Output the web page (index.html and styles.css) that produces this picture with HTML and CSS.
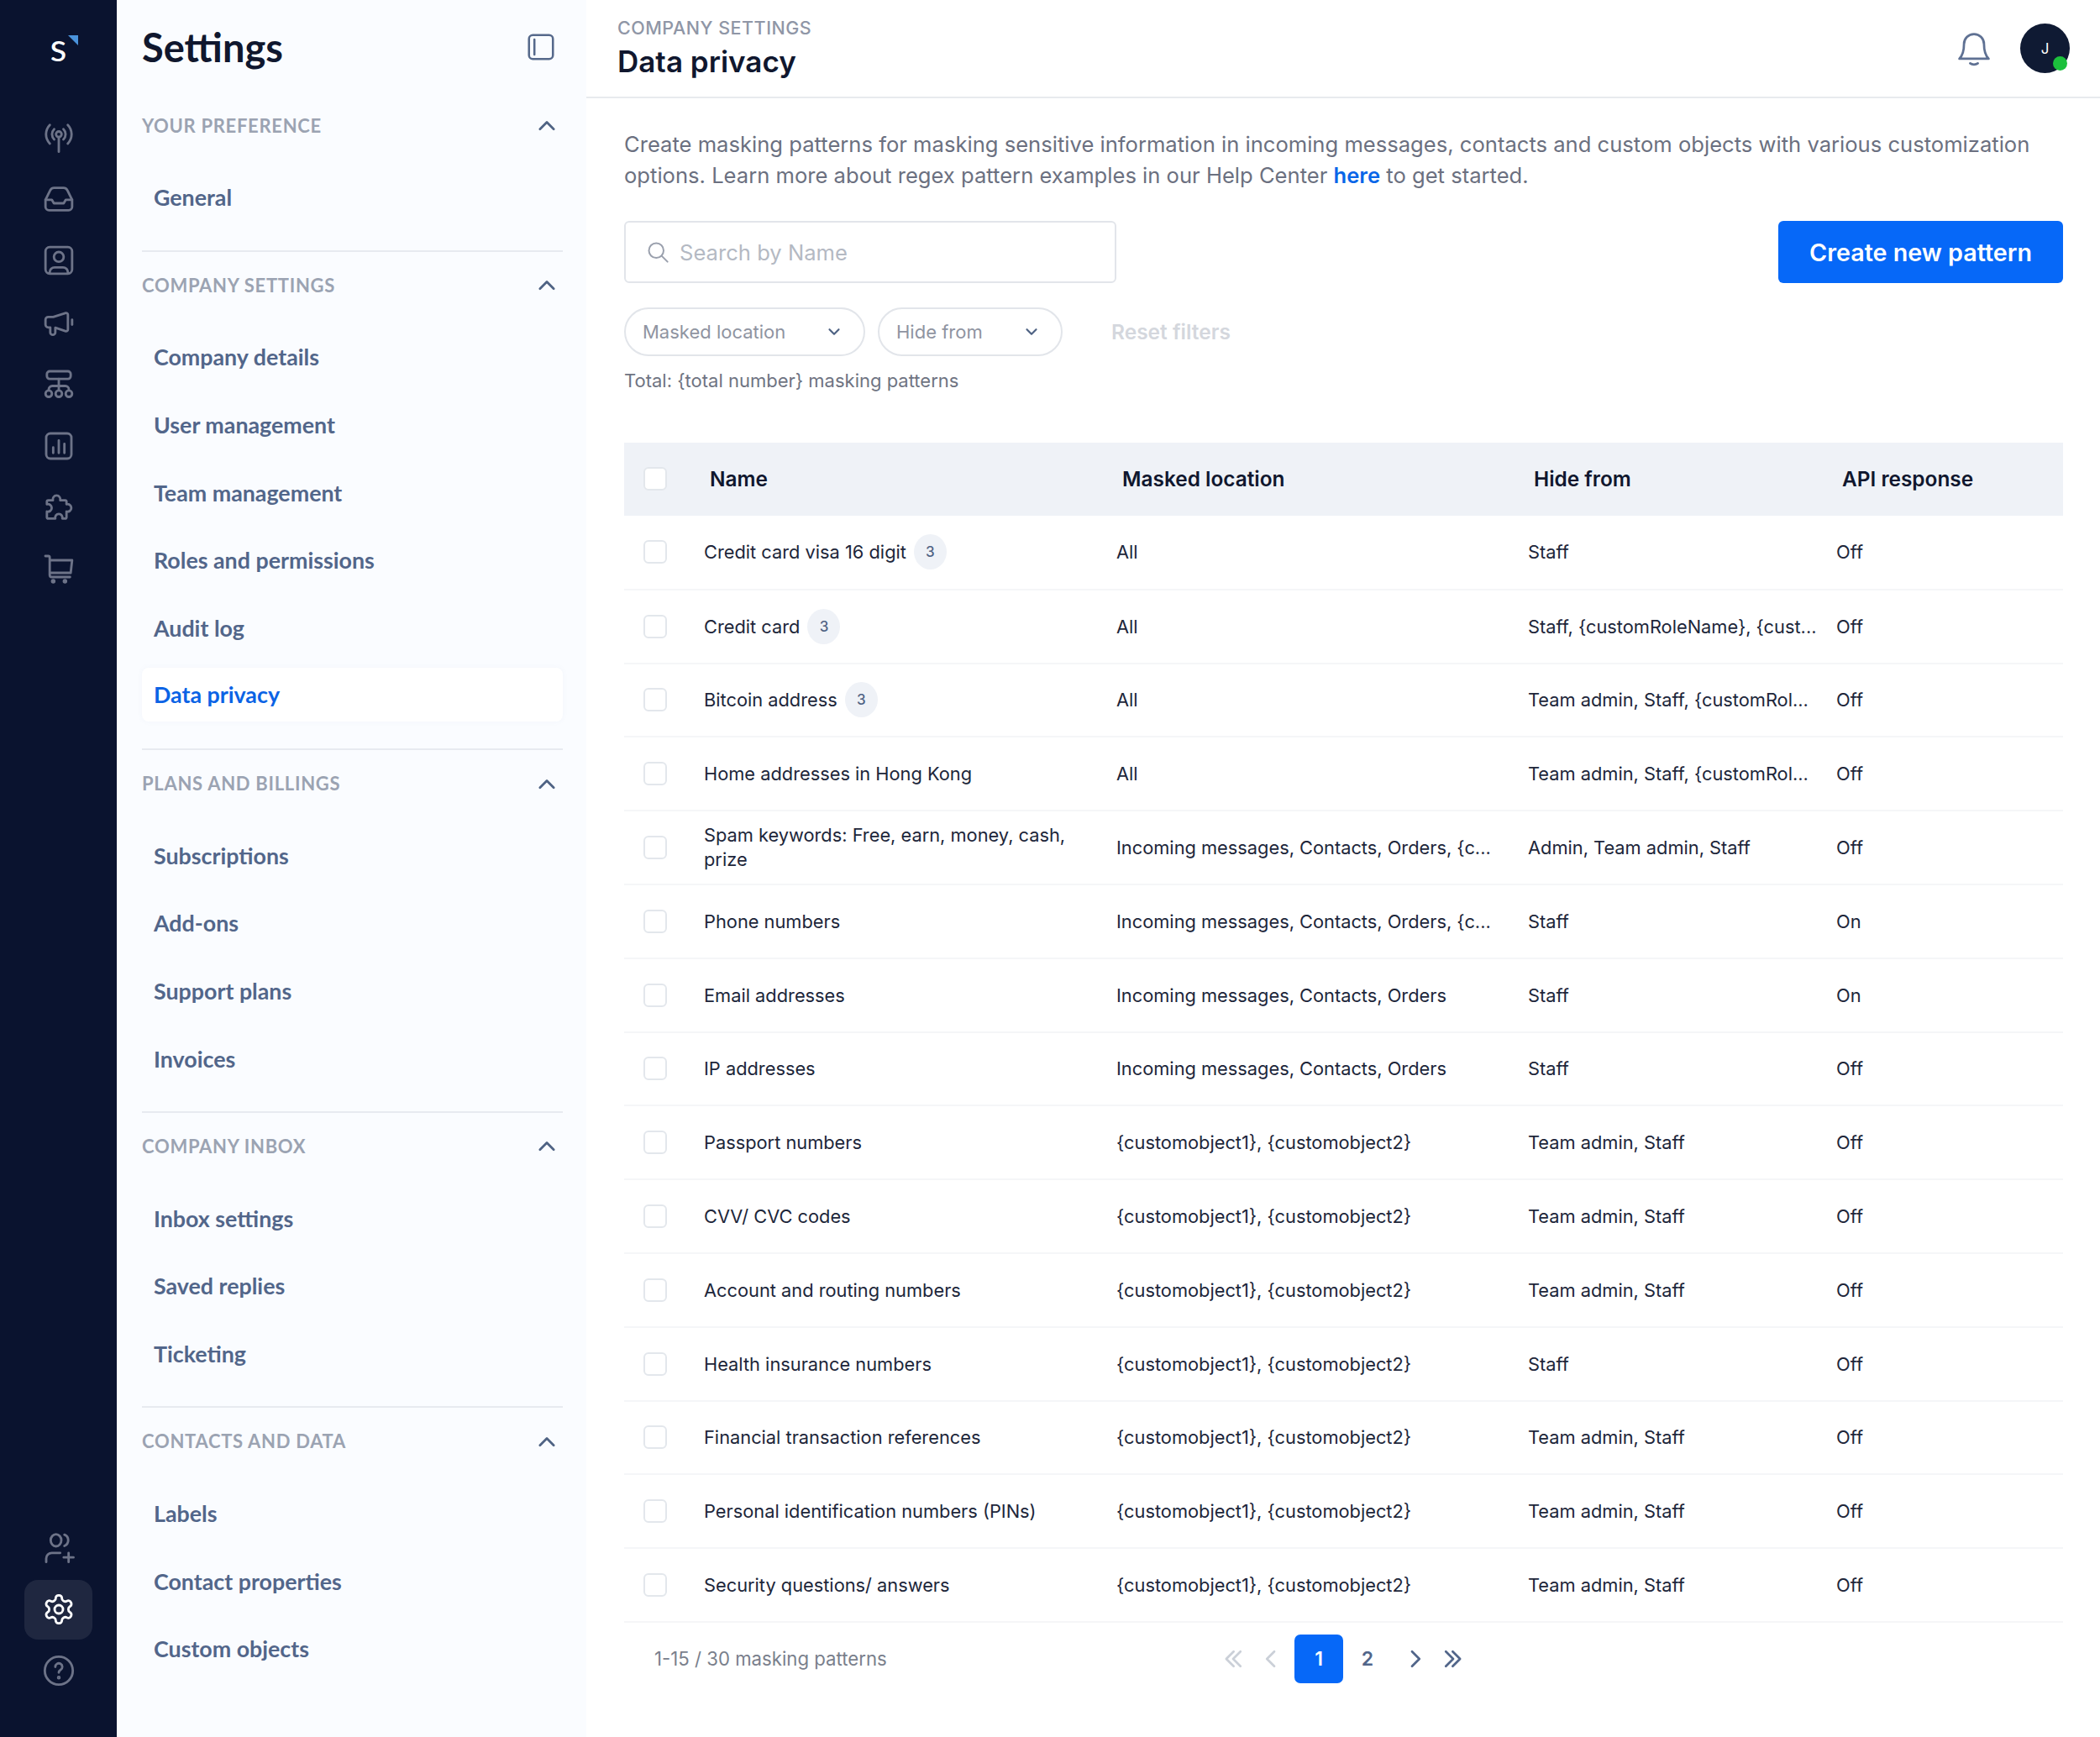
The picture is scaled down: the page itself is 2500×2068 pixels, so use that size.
FILE: index.html
```html
<!DOCTYPE html>
<html lang="en">
<head>
    <meta charset="UTF-8">
    <title>Data privacy</title>
    <link rel="stylesheet" href="styles.css">
</head>
<body>
    <!-- Icon rail -->
    <nav class="rail">
        <div class="logo"><span class="logo-s">s</span><span class="logo-mark"></span></div>
        <div class="rail-btn"><svg viewBox="0 0 24 24"><circle cx="12" cy="9.500" r="2"/><path d="M12 11.500V22M8.700 5.800a5.200 5.200 0 0 0 0 7.400M15.300 5.800a5.200 5.200 0 0 1 0 7.400M5.600 2.800a9.600 9.600 0 0 0 0 13.400M18.400 2.800a9.600 9.600 0 0 1 0 13.400"/></svg></div>
        <div class="rail-btn"><svg viewBox="0 0 24 24"><path d="M2.500 12.500 6 5.500a3 3 0 0 1 2.600-1.500h6.800A3 3 0 0 1 18 5.500l3.500 7v5a2.500 2.500 0 0 1-2.500 2.500H5a2.500 2.500 0 0 1-2.500-2.500z"/><path d="M2.500 12.500H7l1.500 2.500h7l1.500-2.500h4.500"/></svg></div>
        <div class="rail-btn"><svg viewBox="0 0 24 24"><rect x="2.500" y="2.500" width="19" height="19" rx="3"/><circle cx="12" cy="9.500" r="3.500"/><path d="M5.500 21v-.5a3.500 3.500 0 0 1 3.500-3.500h6a3.500 3.500 0 0 1 3.500 3.500v.5"/></svg></div>
        <div class="rail-btn"><svg viewBox="0 0 24 24"><path d="M4.500 8H8l9-2.800a1.200 1.200 0 0 1 1.500 1.200V17a1.200 1.200 0 0 1-1.500 1.200l-7.500-2.500V19a1.800 1.800 0 0 1-3.600 0v-3.500H4.500a2 2 0 0 1-2-2V10a2 2 0 0 1 2-2z"/><path d="M21.500 10v3.500"/></svg></div>
        <div class="rail-btn"><svg viewBox="0 0 24 24"><rect x="3.500" y="3" width="17" height="5.500" rx="2"/><path d="M12 8.500V16.500M4.800 16.500v-.5a2.500 2.500 0 0 1 2.500-2.500h9.400a2.500 2.500 0 0 1 2.500 2.500v.5"/><circle cx="4.800" cy="19" r="2.300"/><circle cx="12" cy="19" r="2.300"/><circle cx="19.200" cy="19" r="2.300"/></svg></div>
        <div class="rail-btn"><svg viewBox="0 0 24 24"><rect x="3" y="3" width="18" height="18" rx="3"/><path d="M8 13v4M12 8v9M16 10.500V17"/></svg></div>
        <div class="rail-btn"><svg viewBox="0 0 24 24"><path d="M7.800 7a2.700 2.700 0 1 1 5.200 0h3.500a1 1 0 0 1 1 1v1.800a2.700 2.700 0 1 1 0 5.200v4a1 1 0 0 1-1 1h-2a2.600 2.600 0 1 0-5 0h-5a1 1 0 0 1-1-1v-4a2.700 2.700 0 1 0 0-5.200V8a1 1 0 0 1 1-1z"/></svg></div>
        <div class="rail-btn"><svg viewBox="0 0 24 24"><path d="M2.400 3H4.500a1 1 0 0 1 1 1v12.500A1.500 1.500 0 0 0 7 18h13M5.500 6h16l-1 9h-15"/><circle class="dot" cx="8" cy="21" r=".8"/><circle class="dot" cx="16.400" cy="21" r=".8"/></svg></div>
        <div class="rail-bottom">
            <div class="rail-btn"><svg viewBox="0 0 24 24"><ellipse cx="10" cy="6.500" rx="3.800" ry="4.300"/><path d="M16 2.500a4.300 4.300 0 0 1 0 8M3 22v-2.500a4 4 0 0 1 4-4h6M19 15.500v6.500M15.500 18.700h7"/></svg></div>
            <div class="rail-btn active"><svg viewBox="0 0 24 24"><path d="M12.220 2h-.44a2 2 0 0 0-2 2v.18a2 2 0 0 1-1 1.730l-.43.25a2 2 0 0 1-2 0l-.15-.08a2 2 0 0 0-2.730.73l-.22.38a2 2 0 0 0 .73 2.730l.15.1a2 2 0 0 1 1 1.720v.51a2 2 0 0 1-1 1.740l-.15.09a2 2 0 0 0-.73 2.730l.22.38a2 2 0 0 0 2.730.73l.15-.08a2 2 0 0 1 2 0l.43.25a2 2 0 0 1 1 1.730V20a2 2 0 0 0 2 2h.44a2 2 0 0 0 2-2v-.18a2 2 0 0 1 1-1.730l.43-.25a2 2 0 0 1 2 0l.15.08a2 2 0 0 0 2.730-.73l.22-.39a2 2 0 0 0-.73-2.730l-.15-.08a2 2 0 0 1-1-1.740v-.5a2 2 0 0 1 1-1.740l.15-.09a2 2 0 0 0 .73-2.730l-.22-.38a2 2 0 0 0-2.730-.73l-.15.08a2 2 0 0 1-2 0l-.43-.25a2 2 0 0 1-1-1.730V4a2 2 0 0 0-2-2z"/><circle cx="12" cy="12" r="3"/></svg></div>
            <div class="rail-btn"><svg viewBox="0 0 24 24"><circle cx="12" cy="12" r="10"/><path d="M9.500 9.300a2.500 2.500 0 1 1 3.800 2.100c-.8.5-1.300 1-1.300 2"/><circle class="dot" cx="12" cy="17" r=".5"/></svg></div>
        </div>
    </nav>

    <!-- Settings menu -->
    <aside class="sidebar">
        <div class="sidebar-head">
            <h2>Settings</h2>
            <svg class="collapse" viewBox="0 0 24 24"><rect x="2.500" y="2.500" width="19" height="19" rx="3"/><path d="M6.800 6v12"/></svg>
        </div>

        <section class="menu-group">
            <div class="menu-title"><span>YOUR PREFERENCE</span><svg viewBox="0 0 24 24"><path d="M5 16l7-7 7 7"/></svg></div>
            <a class="menu-item">General</a>
        </section>
        <section class="menu-group">
            <div class="menu-title"><span>COMPANY SETTINGS</span><svg viewBox="0 0 24 24"><path d="M5 16l7-7 7 7"/></svg></div>
            <a class="menu-item">Company details</a>
            <a class="menu-item">User management</a>
            <a class="menu-item">Team management</a>
            <a class="menu-item">Roles and permissions</a>
            <a class="menu-item">Audit log</a>
            <a class="menu-item active">Data privacy</a>
        </section>
        <section class="menu-group">
            <div class="menu-title"><span>PLANS AND BILLINGS</span><svg viewBox="0 0 24 24"><path d="M5 16l7-7 7 7"/></svg></div>
            <a class="menu-item">Subscriptions</a>
            <a class="menu-item">Add-ons</a>
            <a class="menu-item">Support plans</a>
            <a class="menu-item">Invoices</a>
        </section>
        <section class="menu-group">
            <div class="menu-title"><span>COMPANY INBOX</span><svg viewBox="0 0 24 24"><path d="M5 16l7-7 7 7"/></svg></div>
            <a class="menu-item">Inbox settings</a>
            <a class="menu-item">Saved replies</a>
            <a class="menu-item">Ticketing</a>
        </section>
        <section class="menu-group last">
            <div class="menu-title"><span>CONTACTS AND DATA</span><svg viewBox="0 0 24 24"><path d="M5 16l7-7 7 7"/></svg></div>
            <a class="menu-item">Labels</a>
            <a class="menu-item">Contact properties</a>
            <a class="menu-item">Custom objects</a>
        </section>
    </aside>

    <main class="main">
        <header class="topbar">
            <div class="topbar-title">
                <div class="crumb">COMPANY SETTINGS</div>
                <h1>Data privacy</h1>
            </div>
            <svg class="bell" viewBox="0 0 24 24"><path d="M12 2.500a6.500 6.500 0 0 0-6.500 6.500c0 6-1.500 8-3 9.500h19c-1.500-1.500-3-3.500-3-9.500A6.500 6.500 0 0 0 12 2.500z"/><path d="M9.500 21.500c1.300 1 3.700 1 5 0"/></svg>
            <div class="avatar">J<span class="status"></span></div>
        </header>

        <div class="content">
            <p class="intro">Create masking patterns for masking sensitive information in incoming messages, contacts and custom objects with various customization options. Learn more about regex pattern examples in our Help Center <a>here</a> to get started.</p>

            <div class="toolbar">
                <div class="search">
                    <svg viewBox="0 0 24 24"><circle cx="10.500" cy="10.500" r="7.500"/><path d="M16 16l6 6"/></svg>
                    <span>Search by Name</span>
                </div>
                <button class="primary">Create new pattern</button>
            </div>

            <div class="filters">
                <div class="pill loc">Masked location<svg viewBox="0 0 24 24"><path d="M6 9l6 6 6-6"/></svg></div>
                <div class="pill hide">Hide from<svg viewBox="0 0 24 24"><path d="M6 9l6 6 6-6"/></svg></div>
                <span class="reset">Reset filters</span>
            </div>
            <div class="total">Total: {total number} masking patterns</div>

            <table class="grid">
                <colgroup>
                    <col class="c-check"><col class="c-name"><col class="c-loc"><col class="c-hide"><col class="c-api">
                </colgroup>
                <thead>
                    <tr>
                        <th><span class="check"></span></th>
                        <th>Name</th>
                        <th>Masked location</th>
                        <th>Hide from</th>
                        <th>API response</th>
                    </tr>
                </thead>
                <tbody>
                    <tr><td><span class="check"></span></td><td><div class="name">Credit card visa 16 digit <span class="count">3</span></div></td><td>All</td><td>Staff</td><td>Off</td></tr>
                    <tr><td><span class="check"></span></td><td><div class="name">Credit card <span class="count">3</span></div></td><td>All</td><td>Staff, {customRoleName}, {cust...</td><td>Off</td></tr>
                    <tr><td><span class="check"></span></td><td><div class="name">Bitcoin address <span class="count">3</span></div></td><td>All</td><td>Team admin, Staff, {customRol...</td><td>Off</td></tr>
                    <tr><td><span class="check"></span></td><td>Home addresses in Hong Kong</td><td>All</td><td>Team admin, Staff, {customRol...</td><td>Off</td></tr>
                    <tr><td><span class="check"></span></td><td><div class="wrap">Spam keywords: Free, earn, money, cash, prize</div></td><td>Incoming messages, Contacts, Orders, {c...</td><td>Admin, Team admin, Staff</td><td>Off</td></tr>
                    <tr><td><span class="check"></span></td><td>Phone numbers</td><td>Incoming messages, Contacts, Orders, {c...</td><td>Staff</td><td>On</td></tr>
                    <tr><td><span class="check"></span></td><td>Email addresses</td><td>Incoming messages, Contacts, Orders</td><td>Staff</td><td>On</td></tr>
                    <tr><td><span class="check"></span></td><td>IP addresses</td><td>Incoming messages, Contacts, Orders</td><td>Staff</td><td>Off</td></tr>
                    <tr><td><span class="check"></span></td><td>Passport numbers</td><td>{customobject1}, {customobject2}</td><td>Team admin, Staff</td><td>Off</td></tr>
                    <tr><td><span class="check"></span></td><td>CVV/ CVC codes</td><td>{customobject1}, {customobject2}</td><td>Team admin, Staff</td><td>Off</td></tr>
                    <tr><td><span class="check"></span></td><td>Account and routing numbers</td><td>{customobject1}, {customobject2}</td><td>Team admin, Staff</td><td>Off</td></tr>
                    <tr><td><span class="check"></span></td><td>Health insurance numbers</td><td>{customobject1}, {customobject2}</td><td>Staff</td><td>Off</td></tr>
                    <tr><td><span class="check"></span></td><td>Financial transaction references</td><td>{customobject1}, {customobject2}</td><td>Team admin, Staff</td><td>Off</td></tr>
                    <tr><td><span class="check"></span></td><td>Personal identification numbers (PINs)</td><td>{customobject1}, {customobject2}</td><td>Team admin, Staff</td><td>Off</td></tr>
                    <tr><td><span class="check"></span></td><td>Security questions/ answers</td><td>{customobject1}, {customobject2}</td><td>Team admin, Staff</td><td>Off</td></tr>
                </tbody>
            </table>

            <div class="pager">
                <div class="pager-info">1-15 / 30 masking patterns</div>
                <div class="pages">
                    <svg class="off" viewBox="0 0 24 24"><path d="M12.500 5l-7 7 7 7M19 5l-7 7 7 7"/></svg>
                    <svg class="off" viewBox="0 0 24 24"><path d="M16 5l-7 7 7 7"/></svg>
                    <div class="page-nums">
                        <span class="page current">1</span>
                        <span class="page">2</span>
                    </div>
                    <svg viewBox="0 0 24 24"><path d="M8 5l7 7-7 7"/></svg>
                    <svg viewBox="0 0 24 24"><path d="M5 5l7 7-7 7M11.500 5l7 7-7 7"/></svg>
                </div>
            </div>
        </div>
    </main>
</body>
</html>
```

FILE: styles.css
```css
* {
    margin: 0;
    padding: 0;
    box-sizing: border-box;
}

html, body {
    height: 2068px;
}

body {
    display: flex;
    background: #fff;
    font-family: 'Inter', sans-serif;
    color: #1d2233;
    overflow: hidden;
}

svg {
    fill: none;
    stroke: currentColor;
    stroke-width: 1.7;
    stroke-linecap: round;
    stroke-linejoin: round;
    flex: none;
}

/* rail */
.rail {
    width: 139px;
    flex: none;
    background: #0a132f;
    display: flex;
    flex-direction: column;
    align-items: center;
    color: #6d7388;
    padding-top: 30px;
}

.logo {
    position: relative;
    height: 87px;
    width: 60px;
    color: #fff;
    margin-bottom: 10px;
    text-align: center;
}

.logo-s {
    font-family: 'Lato', sans-serif;
    font-weight: 400;
    font-size: 46px;
    line-height: 52px;
}

.logo-mark {
    position: absolute;
    top: 12px;
    right: 7px;
    border-top: 12px solid #4a93dc;
    border-left: 12px solid transparent;
}

.rail-btn {
    width: 81px;
    height: 73.4px;
    display: flex;
    align-items: center;
    justify-content: center;
    border-radius: 16px;
}

.rail-btn svg {
    width: 40px;
    height: 40px;
}

.rail-btn .dot {
    fill: currentColor;
}

.rail-btn.active {
    background: #1f2740;
    color: #fff;
    height: 71px;
    margin: 1px 0;
}

.rail-bottom {
    margin-top: auto;
    padding-bottom: 42px;
}

/* sidebar */
.sidebar {
    width: 559px;
    flex: none;
    background: #fafcff;
    padding: 0 28px 0 30px;
}

.sidebar-head {
    height: 129px;
    padding: 0 8px 17px 0;
    display: flex;
    align-items: center;
    justify-content: space-between;
}

.sidebar-head h2 {
    font-family: 'Lato', sans-serif;
    font-weight: 700;
    font-size: 47px;
    color: #10172e;
}

.collapse {
    width: 36px;
    height: 36px;
    color: #56698b;
}

.menu-group {
    border-bottom: 2px solid #e7eaf0;
    padding-bottom: 22px;
    margin-bottom: 19.5px;
}

.menu-group.last {
    border-bottom: 0;
}

.menu-title {
    height: 40px;
    display: flex;
    align-items: center;
    justify-content: space-between;
    font-family: 'Lato', sans-serif;
    font-weight: 700;
    font-size: 22px;
    letter-spacing: 0.7px;
    color: #9ba3b2;
    margin-bottom: 26px;
}

.menu-title svg {
    width: 28px;
    height: 28px;
    color: #4f6384;
    stroke-width: 2.4;
    margin-right: 5px;
}

.menu-item {
    display: flex;
    align-items: center;
    height: 80.6px;
    padding-left: 14px;
    font-family: 'Lato', sans-serif;
    font-weight: 700;
    font-size: 26.8px;
    color: #52668a;
    border-radius: 8px;
}

.menu-item.active {
    color: #0b63e5;
    background: #fff;
    height: 64px;
    margin-top: 7px;
    margin-bottom: 10px;
    box-shadow: 0 0 6px rgba(120, 140, 180, 0.06);
}

/* main */
.main {
    flex: 1;
    min-width: 0;
}

.topbar {
    height: 117px;
    border-bottom: 2px solid #e8eaee;
    display: flex;
    align-items: center;
    padding: 0 36px 0 37px;
}

.topbar-title {
    flex: 1;
}

.crumb {
    font-size: 21.5px;
    font-weight: 500;
    letter-spacing: 0.5px;
    color: #8f96a6;
    line-height: 30px;
}

.topbar h1 {
    font-size: 35px;
    font-weight: 600;
    line-height: 50px;
    color: #10172e;
}

.bell {
    width: 44px;
    height: 44px;
    color: #5f7193;
    stroke-width: 1.5;
    margin-right: 33px;
}

.avatar {
    position: relative;
    width: 59px;
    height: 59px;
    border-radius: 50%;
    background: #0f1a33;
    color: #fff;
    font-size: 17px;
    display: flex;
    align-items: center;
    justify-content: center;
}

.status {
    position: absolute;
    right: 3px;
    bottom: 3px;
    width: 17px;
    height: 17px;
    border-radius: 50%;
    background: #1cc03c;
}

.content {
    padding: 37px 44px 0 45px;
}

.intro {
    font-size: 25.6px;
    line-height: 36.5px;
    color: #6b7080;
}

.intro a {
    color: #0866e8;
    font-weight: 600;
}

.toolbar {
    display: flex;
    justify-content: space-between;
    margin-top: 36px;
}

.search {
    width: 586px;
    height: 74px;
    border: 2px solid #e2e5ea;
    border-radius: 6px;
    display: flex;
    align-items: center;
    padding-left: 24px;
    gap: 12px;
    color: #b4b9c3;
    font-size: 25.6px;
}

.search svg {
    width: 28px;
    height: 28px;
    color: #9aa0ad;
}

.primary {
    width: 339px;
    height: 74px;
    border: none;
    border-radius: 6px;
    background: #0668f8;
    color: #fff;
    font-family: inherit;
    font-size: 28.7px;
    font-weight: 600;
}

.filters {
    display: flex;
    align-items: center;
    margin-top: 29px;
    gap: 15px;
}

.pill {
    height: 58px;
    border: 2px solid #e2e5ea;
    border-radius: 29px;
    display: flex;
    align-items: center;
    justify-content: space-between;
    padding: 0 24px 0 20px;
    font-size: 22px;
    color: #8f94a1;
}

.pill.loc { width: 287px; }
.pill.hide { width: 220px; }

.pill svg {
    width: 22px;
    height: 22px;
    color: #4f6384;
    stroke-width: 2.4;
}

.reset {
    margin-left: 43px;
    font-size: 24.5px;
    font-weight: 600;
    color: #d4d7dd;
}

.total {
    font-size: 22px;
    color: #6f7482;
    margin-top: 15px;
    line-height: 28px;
}

/* table */
.grid {
    width: 1713px;
    margin-top: 60px;
    border-collapse: collapse;
    table-layout: fixed;
}

.c-check { width: 95px; }
.c-name { width: 491px; }
.c-loc { width: 490px; }
.c-hide { width: 367px; }
.c-api { width: 270px; }

.grid th {
    background: #eff2f7;
    height: 87px;
    text-align: left;
    padding: 0 0 2px 7px;
    font-size: 24.4px;
    font-weight: 600;
    color: #10172e;
}

.grid th:first-child,
.grid td:first-child {
    padding-left: 23px;
}

.grid td {
    height: 87.8px;
    font-size: 21.8px;
    color: #20263a;
    border-bottom: 2px solid #f5f6f8;
    white-space: nowrap;
}

.grid .name {
    display: flex;
    align-items: center;
    gap: 9px;
}

.grid .wrap {
    white-space: normal;
    width: 450px;
    line-height: 29px;
}

.check {
    display: block;
    width: 28px;
    height: 28px;
    border: 2px solid #e3e7ec;
    border-radius: 6px;
    background: #fff;
}

.count {
    display: flex;
    align-items: center;
    justify-content: center;
    width: 39px;
    height: 42px;
    border-radius: 50%;
    background: #eff2f7;
    font-size: 17px;
    font-weight: 500;
    color: #4f6384;
}

/* pagination */
.pager {
    display: flex;
    align-items: center;
    height: 86px;
    padding-left: 36px;
}

.pager-info {
    width: 674px;
    font-size: 22.2px;
    color: #7a7f8c;
}

.pages {
    display: flex;
    align-items: center;
    gap: 14px;
    color: #52668a;
}

.pages svg {
    width: 30px;
    height: 30px;
    stroke-width: 2.2;
}

.pages .off {
    color: #cbd0d8;
}

.page-nums {
    display: flex;
}

.page {
    width: 58px;
    height: 58px;
    border-radius: 7px;
    display: flex;
    align-items: center;
    justify-content: center;
    font-size: 23px;
    font-weight: 600;
}

.page.current {
    background: #0668f8;
    color: #fff;
}
```
